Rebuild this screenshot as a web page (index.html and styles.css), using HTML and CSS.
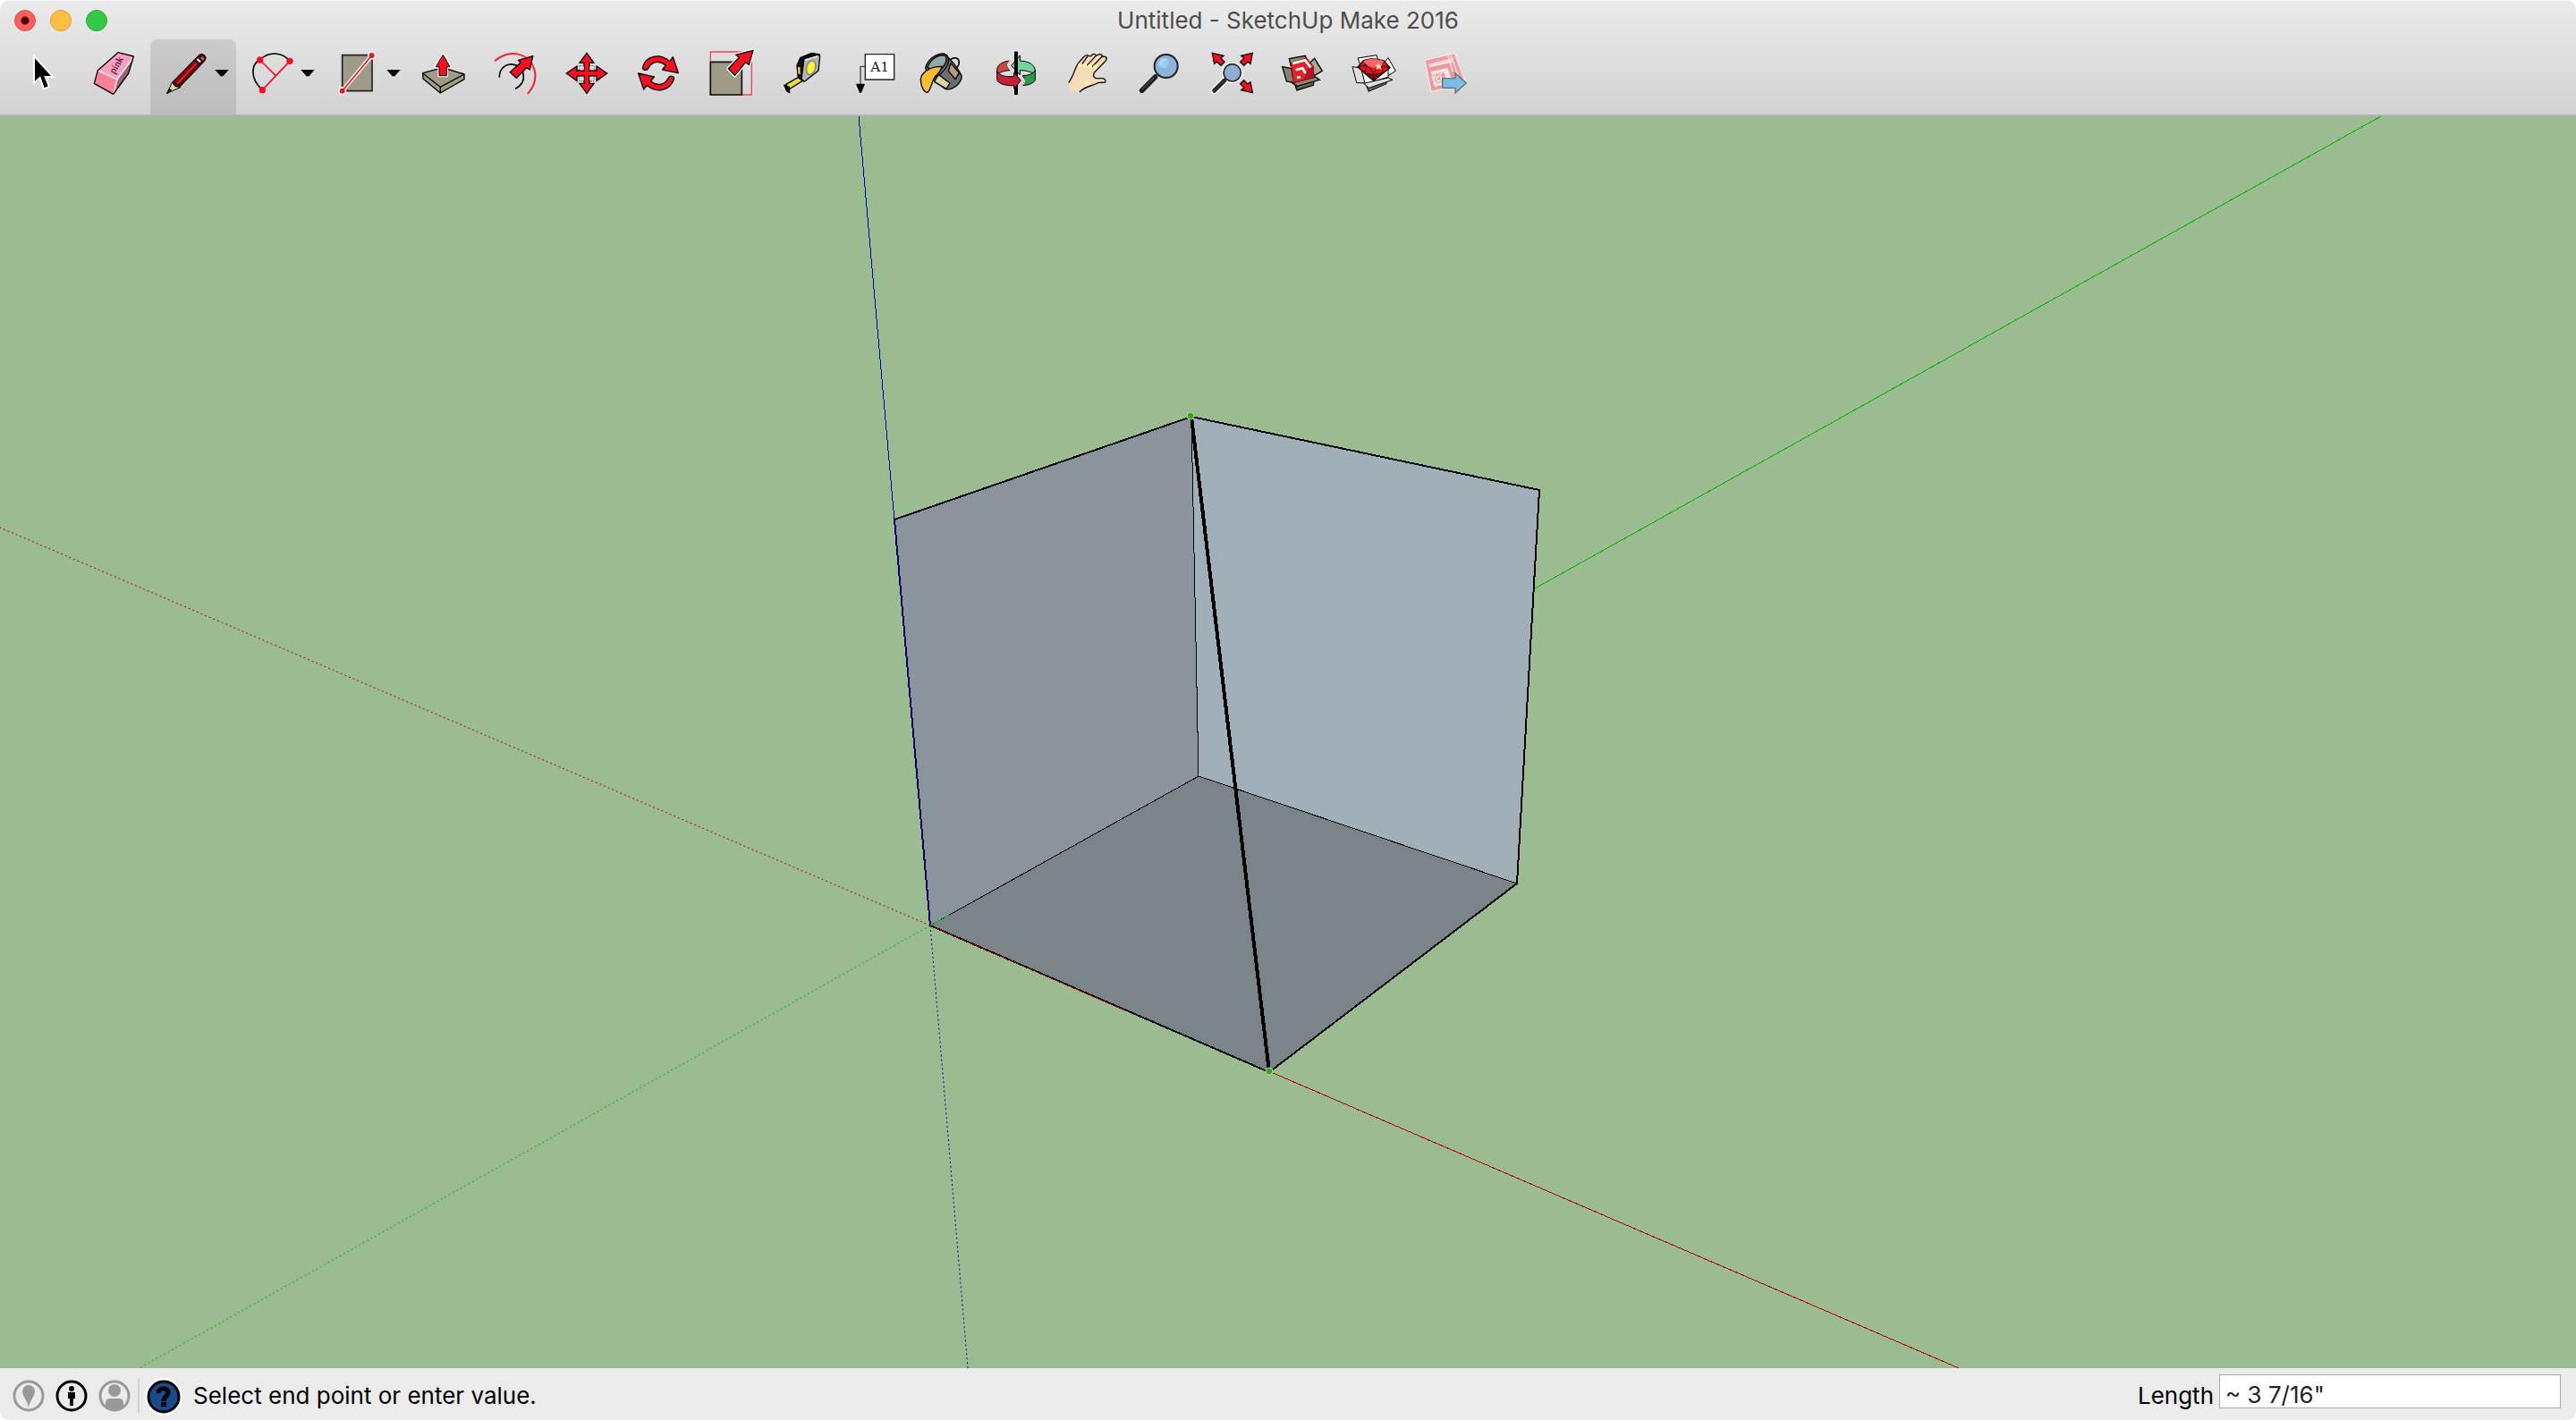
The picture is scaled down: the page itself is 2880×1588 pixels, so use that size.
FILE: index.html
```html
<!DOCTYPE html>
<html lang="en">
<head>
<meta charset="utf-8">
<title>Untitled - SketchUp Make 2016</title>
<link rel="stylesheet" href="styles.css">
</head>
<body>
<div class="window">
  <header class="header">
    <div class="titlebar">
      <div class="lights">
        <button class="light light-close" aria-label="Close"></button>
        <button class="light light-minimize" aria-label="Minimize"></button>
        <button class="light light-zoom" aria-label="Full screen"></button>
      </div>
      <h1 class="title">Untitled - SketchUp Make 2016</h1>
    </div>
    <nav class="toolbar" aria-label="Tools">
      <button class="tool" aria-label="Select">
        <svg class="icon" viewBox="24 156 240 180"><path d="M114 188V278L134 261L147 298L165 291L152 258L178 258Z" fill="#000" stroke="#fff" stroke-width="6"/></svg>
      </button>
      <button class="tool" aria-label="Eraser">
        <svg class="icon" viewBox="264 156 240 180" stroke-linejoin="round">
          <path d="M396 176L448 189L431 246L380 316L316 280L328 236Z" fill="#ff9fc0"/>
          <path d="M328 236L393 267L380 316L316 280Z" fill="#fe7f98"/>
          <path d="M393 267L447 193L432 246L380 316Z" fill="#9b6473"/>
          <path d="M328 236L393 267L446 194M393 267L382 312" fill="none" stroke="#fff" stroke-width="4"/>
          <path d="M396 176L448 189L431 246L380 316L316 280L328 236Z" fill="none" stroke="#000" stroke-width="4"/>
          <text class="eraser-text" transform="translate(384 250) rotate(-60)">pink</text>
        </svg>
      </button>
      <button class="tool split active" aria-label="Line">
        <svg class="icon" viewBox="504 156 288 180">
          <path d="M559 314L578 276L605 293Z" fill="#d8d79b" stroke="#000" stroke-width="3"/>
          <path d="M559 314L568 296L577 302Z"/>
          <path d="M578 276L668 184Q678 178 686 185Q694 193 688 203L603 292L588 290Z" fill="#4a0a10" stroke="#000" stroke-width="3"/>
          <path d="M595 280L660 211" stroke="#f4121f" stroke-width="7"/>
          <path d="M584 278L653 207" stroke="#8f0b14" stroke-width="4"/>
          <path d="M657 201L670 213" stroke="#222" stroke-width="14"/>
          <path d="M661 198L672 208" stroke="#fff" stroke-width="6"/>
          <path d="M675 192L683 200" stroke="#c4626a" stroke-width="8"/>
          <path d="M721 234H767L748 256H740Z"/>
        </svg>
      </button>
      <button class="tool split" aria-label="Arc">
        <svg class="icon" viewBox="792 156 288 180">
          <path d="M880 302C834 258 845 214 872 201C901 171 947 174 972 205" fill="none" stroke="#000" stroke-width="5"/>
          <path d="M880 302L972 205M872 201L925 254" stroke="#fd0d1f" stroke-width="5"/>
          <g fill="#fd0d1f"><circle cx="872" cy="201" r="11"/><circle cx="972" cy="205" r="11"/><circle cx="880" cy="302" r="11"/></g>
          <path d="M1009 234H1055L1036 256H1028Z"/>
        </svg>
      </button>
      <button class="tool split" aria-label="Rectangle">
        <svg class="icon" viewBox="1080 156 288 180">
          <path d="M1148 185H1248V305H1148Z" fill="#9e9b87" stroke="#222" stroke-width="5"/>
          <path d="M1148 305L1247 186" stroke="#fff" stroke-width="13"/>
          <g fill="#fff"><circle cx="1148" cy="305" r="14"/><circle cx="1247" cy="186" r="14"/></g>
          <path d="M1148 305L1247 186" stroke="#fd0d1f" stroke-width="5"/>
          <g fill="#fd0d1f"><circle cx="1148" cy="305" r="9"/><circle cx="1247" cy="186" r="9"/></g>
          <path d="M1297 234H1343L1324 256H1316Z"/>
        </svg>
      </button>
      <button class="tool" aria-label="Push/Pull">
        <svg class="icon" viewBox="18 66 240 180" stroke-linejoin="round">
          <path d="M68 155L136 137L207 159V176L127 222L69 174Z" fill="#9e9b87" stroke="#000" stroke-width="4"/>
          <path d="M68 156L127 202L207 159M127 202V222" fill="none" stroke="#000" stroke-width="4"/>
          <path d="M136 94L159 134H148V164H123V134H112Z" fill="#fd0d1f" stroke="#fff" stroke-width="10"/>
          <path d="M136 94L159 134H148V164H123V134H112Z" fill="#fd0d1f" stroke="#000" stroke-width="3"/>
        </svg>
      </button>
      <button class="tool" aria-label="Offset">
        <svg class="icon" viewBox="258 66 240 180" fill="none" stroke-linecap="round">
          <path d="M311 113C360 72 425 88 442 142C450 172 442 200 421 223" stroke="#fd1c33" stroke-width="6"/>
          <path d="M325 168C326 136 350 121 376 127C408 136 422 183 380 207" stroke="#000" stroke-width="5"/>
          <path d="M437 98L427 144L416 137L382 172L361 152L396 120L389 112Z" fill="#fd0d1f" stroke="#000" stroke-width="4"/>
        </svg>
      </button>
      <button class="tool" aria-label="Move">
        <svg class="icon" viewBox="498 66 240 180">
          <path d="M594 131H642V181H594Z" fill="#fff" stroke="#000" stroke-width="2" stroke-dasharray="5 3"/>
          <path d="M618 88L642 121H627V147H651V132L686 156L651 181V165H627V190H642L618 223L594 190H609V165H585V181L550 156L585 132V147H609V121H594Z" fill="#fd0d1f" stroke="#000" stroke-width="4"/>
          <path d="M596 133H608V145H596ZM628 133H640V145H628ZM596 167H608V179H596ZM628 167H640V179H628Z" fill="#ddd"/>
        </svg>
      </button>
      <button class="tool" aria-label="Rotate">
        <svg class="icon" viewBox="738 66 240 180" fill="#fd0d1f" stroke="#000" stroke-width="4" stroke-linejoin="round">
          <path d="M806 134C817 98 862 86 896 116L907 101L925 155L872 144L883 129C860 110 834 117 824 140C818 149 802 145 806 134Z"/>
          <path d="M910 176C898 212 853 226 820 196L809 210L791 156L844 168L833 182C856 202 882 194 892 171C898 162 914 166 910 176Z"/>
        </svg>
      </button>
      <button class="tool" aria-label="Scale">
        <svg class="icon" viewBox="978 66 240 180">
          <path d="M1033 84H1171V228H1033Z" fill="none" stroke="#fa4055" stroke-width="4"/>
          <path d="M1033 118H1138V228H1033Z" fill="#9e9b87" stroke="#111" stroke-width="5"/>
          <path d="M1176 79L1162 127L1151 119L1115 163L1093 140L1129 103L1118 94Z" fill="#fff" stroke="#fff" stroke-width="12" stroke-linejoin="round"/>
          <path d="M1176 79L1162 127L1151 119L1115 163L1093 140L1129 103L1118 94Z" fill="#fd0d1f" stroke="#000" stroke-width="4"/>
        </svg>
      </button>
      <button class="tool" aria-label="Tape Measure">
        <svg class="icon" viewBox="-12 66 240 180" stroke="#000" stroke-width="4" stroke-linejoin="round">
          <path d="M56 193L102 167L112 181L66 210Z" fill="#e9df2c"/>
          <path d="M50 195L67 202L68 221L58 214Z"/>
          <path d="M93 130L104 104L142 88L169 93L118 184L97 171Z" fill="#111"/>
          <path d="M96 136L103 134L104 160L97 157Z" fill="#e9df2c" stroke="none"/>
          <path d="M117 107L163 94L170 98L165 147L118 184L108 175Z" fill="#b5b5b5"/>
          <path d="M120 112L162 98" stroke="#eee"/>
          <ellipse cx="140" cy="137" rx="15" ry="24" transform="rotate(17 140 137)" fill="#fbf52c" stroke="#888" stroke-width="5"/>
        </svg>
      </button>
      <button class="tool" aria-label="Text">
        <svg class="icon" viewBox="228 66 240 180">
          <path d="M322 133H306V194" fill="none" stroke="#444" stroke-width="4"/>
          <path d="M291 191H321L309 221H303Z"/>
          <path d="M322 92H419V177H322Z" fill="#fff" stroke="#222" stroke-width="4"/>
          <text class="label-text" x="371" y="150" text-anchor="middle">A1</text>
        </svg>
      </button>
      <button class="tool" aria-label="Paint Bucket">
        <svg class="icon" viewBox="468 66 240 180" stroke="#000" stroke-width="4" stroke-linejoin="round">
          <path d="M607 113C616 99 636 103 637 118C638 139 612 148 606 159" fill="none" stroke-width="5"/>
          <path d="M584 90C602 102 626 126 645 164Q647 182 627 199Q607 214 591 208L549 180Z" fill="#6b6d73"/>
          <path d="M609 122L637 155L624 176L601 148Z" fill="#b29d7c"/>
          <path d="M567 160L606 189L594 208L554 184Z" fill="#ded4a0"/>
          <path d="M524 138C532 103 575 79 596 95C615 121 581 157 557 169L530 155Z" fill="#6b6d73"/>
          <path d="M531 136C541 105 575 88 592 99C601 118 579 145 558 155Z" fill="#91aaa7"/>
          <path d="M580 133C540 132 508 153 508 178C508 204 522 220 530 220C541 218 544 184 557 166Q572 154 580 133Z" fill="#febd30"/>
        </svg>
      </button>
      <button class="tool" aria-label="Orbit">
        <svg class="icon" viewBox="708 66 240 180" stroke="#000" stroke-width="3" stroke-linejoin="round">
          <path d="M764 146C763 128 782 117 806 114L797 129L808 146C790 146 772 153 765 160Z" fill="#cc4942"/>
          <path d="M841 96V114C872 115 892 129 892 148L884 155C873 150 861 146 841 146V161L812 130Z" fill="#77d29a"/>
          <path d="M892 146V179C887 190 867 196 849 197L859 180L850 164C872 163 886 157 892 146Z" fill="#2c9a48"/>
          <path d="M828 83V228" stroke-width="12"/>
          <path d="M764 149C770 163 794 170 821 166V153L844 180L821 208V197C790 199 764 188 764 176Z" fill="#c81f3a"/>
          <path d="M806 113L798 129L809 146M845 166L859 180L850 197" fill="none" stroke="#fff"/>
        </svg>
      </button>
      <button class="tool" aria-label="Pan">
        <svg class="icon" viewBox="948 66 240 180">
          <path d="M1004 187C1020 169 1023 144 1035 124L1054 102Q1062 92 1070 96L1077 99L1086 92Q1095 90 1096 97L1108 92Q1117 92 1117 99L1129 101Q1134 106 1129 113L1090 154L1087 166L1096 173H1120Q1132 178 1126 186L1101 188C1088 199 1064 203 1041 219Q1006 220 1004 187Z" fill="#f5dcb9"/>
          <path d="M1004 187C1020 169 1023 144 1035 124L1054 102Q1062 92 1070 96L1077 99L1086 92Q1095 90 1096 97L1108 92Q1117 92 1117 99L1129 101Q1134 106 1129 113L1090 154L1087 166L1096 173H1120Q1132 178 1126 186L1101 188C1088 199 1060 197 1041 219M1070 96L1049 125M1096 97L1065 130M1117 99L1083 134" fill="none" stroke="#111" stroke-width="4" stroke-linejoin="round"/>
          <path d="M1042 129L1095 134M1066 190L1078 188" stroke="#fdf6a3" stroke-width="13" stroke-linecap="round" stroke-dasharray="1 16"/>
        </svg>
      </button>
      <button class="tool" aria-label="Zoom">
        <svg class="icon" viewBox="-42 66 240 180">
          <path d="M20 214L65 168" stroke="#1c1e1f" stroke-width="17" stroke-linecap="round"/>
          <path d="M20 211L60 170" stroke="#4a4c4d" stroke-width="4"/>
          <circle cx="101" cy="132" r="39" fill="#8db4d9" stroke="#1e2224" stroke-width="6"/>
          <circle cx="93" cy="122" r="17" fill="#99cdf5"/>
          <path d="M82 128C82 115 91 108 104 109" fill="none" stroke="#c7eaff" stroke-width="4"/>
        </svg>
      </button>
      <button class="tool" aria-label="Zoom Extents">
        <svg class="icon" viewBox="198 66 240 180">
          <g fill="#fd0d1f" stroke="#000" stroke-width="4">
            <path d="M391 88L384 124L375 117L362 130L350 118L363 105L353 97Z"/>
            <path d="M391 221L384 185L375 192L362 179L350 191L363 204L353 212Z"/>
            <path d="M256 88L263 124L272 117L285 130L297 118L284 105L294 97Z"/>
          </g>
          <path d="M263 214L297 180" stroke="#fff" stroke-width="23" stroke-linecap="round"/>
          <circle cx="323" cy="154" r="35" fill="#fff"/>
          <path d="M263 214L297 180" stroke="#2a2c2d" stroke-width="15" stroke-linecap="round"/>
          <circle cx="323" cy="154" r="29" fill="#8daed0" stroke="#1e2224" stroke-width="5"/>
        </svg>
      </button>
      <button class="tool" aria-label="3D Warehouse">
        <svg class="icon" viewBox="438 66 240 180" stroke="#000" stroke-width="4">
          <path d="M514 107L568 97L577 118L520 132Z" fill="#8b8976"/>
          <path d="M578 126L599 106L625 148L598 164Z" fill="#aaa893"/>
          <path d="M530 185L598 174L595 196L540 213Z" fill="#6a6350"/>
          <path d="M491 134L522 140L530 187L505 183Z" fill="#858371"/>
          <path d="M524 188L602 168L616 178L541 199Z" fill="#8b8976"/>
          <path d="M521 123L572 104L596 134V169L553 182L528 187Z" fill="#de252b" stroke="#8c1118" stroke-width="3"/>
          <path d="M575 143L594 134V168L561 179Z" fill="#b3141f" stroke="none"/>
          <path d="M526 123L567 112L586 136M536 145L559 139L569 156M540 171L552 168" fill="none" stroke="#fff" stroke-width="8"/>
        </svg>
      </button>
      <button class="tool" aria-label="Extension Warehouse">
        <svg class="icon" viewBox="678 66 240 180" stroke="#000" stroke-width="3" stroke-linejoin="round">
          <path d="M744 105L807 95L816 125L756 139ZM832 121L846 104L871 148L842 166Z" fill="#fff"/>
          <path d="M726 134L755 138L769 188L740 188Z" fill="#ddd"/>
          <path d="M770 187L842 172L840 191L780 217Z" fill="#6a6350"/>
          <path d="M755 139L846 139V168L769 193Z" fill="#fff"/>
          <path d="M764 190L846 171L861 178L781 205Z" fill="#ddd"/>
          <path d="M763 113L793 106L832 114L852 137L797 181L744 135Z" fill="#f00f18" stroke-width="4"/>
          <path d="M763 113L793 106L832 114L820 132L795 137L775 130Z" fill="#fa6766" stroke="none"/>
          <path d="M765 155L797 161L829 155L797 181Z" fill="#8c0710"/>
          <path d="M745 136L772 127L797 153L823 130L852 137M797 153V180M772 127L768 154M823 130L829 154" fill="none"/>
          <path d="M813 121L817 130L828 127L820 135L826 145L815 139L805 145L809 134L800 127L811 130Z" fill="#fff2bd" stroke="none"/>
        </svg>
      </button>
      <button class="tool" aria-label="Send to LayOut">
        <svg class="icon" viewBox="918 66 240 180">
          <path d="M969 112L1069 89L1106 190L990 218Z" fill="#ee9a9c" stroke="#f4e5e5" stroke-width="4"/>
          <path d="M983 129L1058 111L1060 119L985 136ZM989 151L1045 137L1060 180L1040 177L1033 152L992 162ZM991 165L1025 157L1030 194L1002 202Z" fill="#f6e7e7"/>
          <path d="M982 127L1066 106M1047 97L1063 150M1056 95L1090 190" fill="none" stroke="#f6e7e7" stroke-width="4"/>
          <circle cx="1016" cy="174" r="13" fill="none" stroke="#e9898c" stroke-width="3"/>
          <path d="M1010 180L1016 167L1022 180M1012 176H1020" fill="none" stroke="#e9898c" stroke-width="3"/>
          <path d="M1028 173H1071V156L1108 188L1071 222V205H1028Z" fill="#7dbde5" stroke="#63707a" stroke-width="4"/>
        </svg>
      </button>
    </nav>
  </header>

  <main class="viewport">
    <svg class="scene" viewBox="0 130 2880 1400" preserveAspectRatio="xMidYMid slice" role="img" aria-label="Open box model with drawing axes">
      <g class="axes">
        <path class="axis-blue" d="M960 130L1040 1035"/>
        <path class="axis-green" d="M1340 868L2662 130"/>
        <path class="axis-red" d="M1040 1035L2190 1530"/>
        <path class="axis-blue dotted" d="M1040 1035L1082 1530"/>
        <path class="axis-green dotted" d="M1040 1035L156 1530"/>
        <path class="axis-red dotted" d="M1040 1035L0 590"/>
      </g>
      <path class="face-left" d="M1000 581L1332 466L1340 868L1040 1035Z"/>
      <path class="face-right" d="M1332 466L1721 548L1696 988L1340 868Z"/>
      <path class="face-floor" d="M1040 1035L1340 868L1696 988L1419 1199Z"/>
      <path class="edge-inner" d="M1332 466L1340 868L1040 1035M1340 868L1696 988"/>
      <path class="edge-outer" d="M1040 1035L1000 581L1332 466L1721 548L1696 988L1419 1199Z"/>
      <path class="axis-blue" d="M1000 581L1040 1035"/>
      <path class="axis-red overlay" d="M1040 1035L1260 1131"/>
      <path class="axis-green" d="M1040 1035L1062 1023"/>
      <path class="edge-drawn" d="M1332 466L1419 1199"/>
      <g class="endpoints"><circle cx="1331" cy="465" r="4"/><circle cx="1419" cy="1198" r="4"/></g>
    </svg>
  </main>

  <footer class="statusbar">
    <div class="status-icons">
      <button class="status-button" aria-label="Geo-location">
        <svg class="status-icon" viewBox="0 0 36 36"><circle cx="18" cy="18" r="16" fill="none" stroke="#999" stroke-width="3"/><path d="M18 31C17 23 11 19 11 13A7 7 0 0 1 25 13C25 19 19 23 18 31Z" fill="#999"/></svg>
      </button>
      <button class="status-button" aria-label="Credits">
        <svg class="status-icon" viewBox="0 0 36 36"><circle cx="18" cy="18" r="16" fill="none" stroke="#000" stroke-width="3"/><circle cx="18" cy="10" r="3"/><path d="M14 14H22V21H20V29H16V21H14Z"/></svg>
      </button>
      <button class="status-button" aria-label="Sign in">
        <svg class="status-icon" viewBox="0 0 36 36" fill="#999"><circle cx="18" cy="18" r="16" fill="none" stroke="#999" stroke-width="3"/><circle cx="18" cy="12" r="7"/><path d="M8 31V26Q8 21 13 21H23Q28 21 28 26V31Q18 38 8 31Z"/></svg>
      </button>
    </div>
    <button class="help-button" aria-label="Help">
      <svg class="help-icon" viewBox="0 0 42 42"><circle cx="21" cy="21" r="21" fill="#fff"/><circle cx="21" cy="21" r="17" fill="#1b4a8a" stroke="#000" stroke-width="3"/><path d="M15 17C15 10 27 10 26 17C26 20 21 21 21 26" fill="none" stroke="#000" stroke-width="5"/><path d="M18 27H24V32H18Z"/></svg>
    </button>
    <p class="hint">Select end point or enter value.</p>
    <label class="measure-label" for="length">Length</label>
    <input class="measure-input" id="length" type="text" value='~ 3 7/16"'>
  </footer>
</div>
</body>
</html>
```
FILE: styles.css
```css
* {
  box-sizing: border-box;
}

body {
  margin: 0;
  background: #fff;
  font-family: Inter, "Liberation Sans", sans-serif;
  font-size: 26px;
  line-height: 32px;
  color: #000;
}

button {
  padding: 0;
  border: 0;
  background: none;
}

svg {
  display: block;
}

.window {
  display: flex;
  flex-direction: column;
  height: 100vh;
  overflow: hidden;
  border-radius: 10px;
}

.header {
  flex: none;
  border-top: 1px solid #f6f6f6;
  border-bottom: 2px solid #b4b4b4;
  background: linear-gradient(#ebebeb, #d2d2d2);
}

.titlebar {
  display: grid;
  grid-template-columns: 1fr auto 1fr;
  align-items: center;
  height: 43px;
  padding: 0 16px;
}

.lights {
  display: flex;
  gap: 16px;
}

.light {
  width: 24px;
  height: 24px;
  border: 1px solid;
  border-radius: 50%;
}

.light-close {
  border-color: #e2463f;
  background: radial-gradient(circle, #4d0000 4px, #fc605c 5px);
}

.light-minimize {
  border-color: #dea034;
  background: #fdbe41;
}

.light-zoom {
  border-color: #27aa35;
  background: #35c94a;
}

.title {
  margin: 0;
  font-size: 26px;
  font-weight: 400;
  color: #4d4d4d;
}

.toolbar {
  display: flex;
  padding-left: 8px;
}

.tool {
  width: 80px;
  height: 84px;
  padding: 8px 0 16px;
}

.split {
  width: 96px;
}

.active {
  border-radius: 8px 8px 0 0;
  background: rgba(0, 0, 0, 0.1);
}

.icon {
  width: 100%;
  height: 60px;
}

.eraser-text {
  font: 34px "Liberation Serif", serif;
}

.label-text {
  font: 46px "DejaVu Serif", serif;
  fill: #222;
}

.viewport {
  flex: 1;
  min-height: 0;
  background: #9bbc91;
}

.scene {
  width: 100%;
  height: 100%;
  fill: none;
}

.scene path {
  shape-rendering: crispEdges;
}

.axis-blue {
  stroke: #0000b4;
}

.axis-green {
  stroke: #00b400;
}

.axis-red {
  stroke: #b40000;
}

.scene .dotted {
  stroke-dasharray: 2 3;
  shape-rendering: auto;
}

.overlay {
  opacity: 0.7;
}

.face-left {
  fill: #8a949c;
}

.face-right {
  fill: #a1afb8;
}

.face-floor {
  fill: #7a858a;
}

.edge-inner {
  stroke: #000;
}

.edge-outer {
  stroke: #000;
  stroke-width: 2;
}

.edge-drawn {
  stroke: #000;
  stroke-width: 4;
}

.endpoints {
  fill: #36a80f;
  stroke: #b9dcae;
}

.statusbar {
  display: flex;
  flex: none;
  align-items: center;
  height: 58px;
  padding: 0 17px 0 14px;
  background: #ebebeb;
}

.status-icons {
  display: flex;
  gap: 12px;
  align-items: center;
  height: 38px;
  margin-top: 4px;
  padding-right: 8px;
  border-right: 2px solid #d2d2d2;
}

.status-icon {
  width: 36px;
  height: 36px;
}

.help-button {
  margin: 6px 12px 0 6px;
}

.help-icon {
  width: 42px;
  height: 42px;
}

.hint {
  flex: 1;
  margin: 4px 0 0;
}

.measure-label {
  margin: 4px 6px 0 0;
}

.measure-input {
  width: 382px;
  height: 38px;
  margin-bottom: 6px;
  padding: 6px 6px 0;
  border: 1px solid #aaa;
  border-radius: 0;
  background: #fff;
  font: inherit;
  color: #222;
}
```
